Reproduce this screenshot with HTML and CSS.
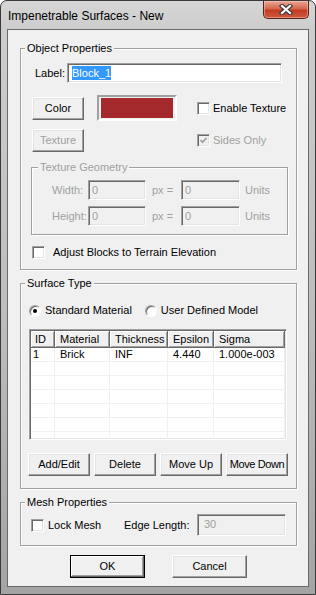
FILE: index.html
```html
<!DOCTYPE html>
<html lang="en">
<head>
    <meta charset="UTF-8">
    <title>Impenetrable Surfaces - New</title>
    <link rel="stylesheet" href="styles.css">
</head>
<body>

<div class="window">
    <div class="titlebar">
        <span class="title">Impenetrable Surfaces - New</span>
        <div class="close">
            <svg width="14" height="11" viewBox="0 0 14 11">
                <path d="M3 2 L11 9 M11 2 L3 9" stroke="#3a3a3a" stroke-width="4.4" stroke-linecap="square"/>
                <path d="M3 2 L11 9 M11 2 L3 9" stroke="#fff" stroke-width="2.2" stroke-linecap="square"/>
            </svg>
        </div>
    </div>

    <div class="client">
        <fieldset class="group obj">
            <legend>Object Properties</legend>
            <div class="body">
                <div class="row label-row">
                    <span class="lbl">Label:</span>
                    <div class="edit label-edit"><span class="sel">Block_1</span></div>
                </div>
                <div class="row color-row">
                    <button class="btn small">Color</button>
                    <div class="swatch"><div class="swatch-fill"></div></div>
                    <label class="check enable"><span class="box"></span>Enable Texture</label>
                </div>
                <div class="row tex-row">
                    <button class="btn small off">Texture</button>
                    <label class="check sides off">
                        <span class="box">
                            <svg width="9" height="9" viewBox="0 0 9 9"><polyline points="1.5,4 3.5,6.2 7.6,2" fill="none" stroke="#a0a0a0" stroke-width="1.7"/></svg>
                        </span>Sides Only
                    </label>
                </div>

                <fieldset class="group geo off">
                    <legend>Texture Geometry</legend>
                    <div class="body">
                        <div class="geo-row">
                            <span class="geo-lbl">Width:</span>
                            <div class="edit num px-edit">0</div>
                            <span class="px">px =</span>
                            <div class="edit num unit-edit">0</div>
                            <span class="units">Units</span>
                        </div>
                        <div class="geo-row">
                            <span class="geo-lbl">Height:</span>
                            <div class="edit num px-edit">0</div>
                            <span class="px">px =</span>
                            <div class="edit num unit-edit">0</div>
                            <span class="units">Units</span>
                        </div>
                    </div>
                </fieldset>

                <label class="check adjust"><span class="box"></span>Adjust Blocks to Terrain Elevation</label>
            </div>
        </fieldset>

        <fieldset class="group surface">
            <legend>Surface Type</legend>
            <div class="body">
                <div class="radios">
                    <label class="radio"><span class="dot on"></span>Standard Material</label>
                    <label class="radio second"><span class="dot"></span>User Defined Model</label>
                </div>

                <div class="listview">
                    <table>
                        <thead>
                            <tr>
                                <th class="c-id">ID</th>
                                <th class="c-mat">Material</th>
                                <th class="c-thk">Thickness</th>
                                <th class="c-eps">Epsilon</th>
                                <th>Sigma</th>
                            </tr>
                        </thead>
                        <tbody>
                            <tr><td>1</td><td>Brick</td><td>INF</td><td>4.440</td><td>1.000e-003</td></tr>
                            <tr><td></td><td></td><td></td><td></td><td></td></tr>
                            <tr><td></td><td></td><td></td><td></td><td></td></tr>
                            <tr><td></td><td></td><td></td><td></td><td></td></tr>
                            <tr><td></td><td></td><td></td><td></td><td></td></tr>
                            <tr><td></td><td></td><td></td><td></td><td></td></tr>
                            <tr><td></td><td></td><td></td><td></td><td></td></tr>
                        </tbody>
                    </table>
                </div>

                <div class="list-buttons">
                    <button class="btn wide">Add/Edit</button>
                    <button class="btn wide">Delete</button>
                    <button class="btn wide">Move Up</button>
                    <button class="btn wide tight">Move Down</button>
                </div>
            </div>
        </fieldset>

        <fieldset class="group mesh">
            <legend>Mesh Properties</legend>
            <div class="body mesh-row">
                <label class="check lock"><span class="box"></span>Lock Mesh</label>
                <span class="edge-lbl">Edge Length:</span>
                <div class="edit edge-edit">30</div>
            </div>
        </fieldset>

        <div class="footer">
            <button class="btn dlg default">OK</button>
            <button class="btn dlg cancel">Cancel</button>
        </div>
    </div>
</div>

</body>
</html>
```

FILE: styles.css
```css
body {
    margin: 0;
    font-family: "Liberation Sans", Arial, sans-serif;
    font-size: 11px;
    line-height: 13px;
    color: #000;
    background: #fff;
}

/* window frame */
.window {
    width: 316px;
    height: 595px;
    box-sizing: border-box;
    border: 1px solid #3a3a3a;
    border-radius: 7px 7px 0 0;
    padding: 0 6px 7px;
    background: linear-gradient(to bottom, #d6d6d6 0, #cdcdcd 28px, #bcbcbc 55%, #a4a4a4 100%);
    display: flex;
    flex-direction: column;
}

.titlebar {
    height: 28px;
    display: flex;
    align-items: flex-start;
}

.title {
    font-size: 12px;
    line-height: 14px;
    margin: 8px 0 0 1px;
    color: #000;
}

.close {
    margin-left: auto;
    width: 46px;
    height: 18px;
    box-sizing: border-box;
    border: 1px solid #5b2016;
    border-top: none;
    border-radius: 0 0 5px 5px;
    background: linear-gradient(to bottom, #e9a999 0, #d6664c 45%, #c33c22 55%, #cf5a3e 100%);
    box-shadow: inset 0 0 0 1px rgba(255, 210, 200, 0.45);
    display: flex;
    align-items: center;
    justify-content: center;
}

.client {
    flex: 1;
    border: 1px solid #6a6a6a;
    background: #f0f0f0;
}

/* group boxes */
.group {
    margin: 0 0 0 12px;
    padding: 0;
    width: 277px;
    box-sizing: border-box;
    min-width: 0;
    border: 1px solid #a0a0a0;
    box-shadow: 1px 1px 0 #fff, inset 1px 1px 0 #fff;
}

.group legend {
    padding: 0 2px;
    margin-left: 4px;
    line-height: 13px;
    background: #f0f0f0;
}

.obj {
    margin-top: 12px;
}

.obj > .body {
    padding: 8px 0 10px 11px;
}

.row {
    display: flex;
    align-items: center;
}

.label-row {
    height: 20px;
}

.lbl {
    margin-left: 3px;
    width: 32px;
}

.color-row {
    height: 26px;
    margin-top: 12px;
}

.tex-row {
    height: 23px;
    margin-top: 8px;
}

/* sunken edit fields */
.edit {
    box-sizing: border-box;
    border: 1px solid;
    border-color: #a0a0a0 #fff #fff #a0a0a0;
    box-shadow: inset 1px 1px 0 #696969, inset -1px -1px 0 #e3e3e3;
    background: #fff;
    padding-left: 3px;
}

.label-edit {
    width: 215px;
    height: 20px;
    display: flex;
    align-items: center;
    padding-left: 4px;
}

.sel {
    background: #3399ff;
    color: #fff;
    line-height: 14px;
}

.swatch {
    width: 80px;
    height: 26px;
    box-sizing: border-box;
    margin-left: 13px;
    border: 2px solid;
    border-color: #a0a0a0 #fff #fff #a0a0a0;
    padding: 1px 2px;
}

.swatch-fill {
    width: 72px;
    height: 20px;
    background: #a4292c;
}

/* buttons */
.btn {
    font-family: inherit;
    font-size: 11px;
    line-height: 13px;
    color: #000;
    background: #f0f0f0;
    border: 1px solid;
    border-color: #fff #696969 #696969 #fff;
    box-shadow: inset -1px -1px 0 #a0a0a0, inset 1px 1px 0 #e3e3e3;
    padding: 0;
    margin: 0;
    height: 23px;
    white-space: nowrap;
}

.btn.small {
    width: 52px;
}

.btn.off {
    color: #a0a0a0;
}

.btn.wide {
    width: 62px;
}

.btn.tight {
    letter-spacing: -0.4px;
}

.btn.dlg {
    width: 75px;
}

.btn.default {
    border-color: #000;
    box-shadow: inset -1px -1px 0 #696969, inset 1px 1px 0 #fff, inset -2px -2px 0 #a0a0a0;
}

/* checkboxes */
.check {
    display: flex;
    align-items: center;
    height: 13px;
}

.box {
    width: 13px;
    height: 13px;
    box-sizing: border-box;
    border: 1px solid;
    border-color: #a0a0a0 #fff #fff #a0a0a0;
    box-shadow: inset 1px 1px 0 #696969, inset -1px -1px 0 #e3e3e3;
    background: #fff;
    display: flex;
    align-items: center;
    justify-content: center;
    flex-shrink: 0;
}

.check.off {
    color: #a0a0a0;
}

.check.off .box {
    background: #f0f0f0;
}

.enable {
    margin-left: 20px;
}

.enable .box {
    margin-right: 3px;
}

.sides {
    margin-left: 113px;
}

.sides .box {
    margin-right: 3px;
}

.adjust {
    margin-top: 11px;
}

.adjust .box {
    margin-right: 8px;
}

/* texture geometry */
.geo {
    margin: 9px 0 0 -1px;
    width: 257px;
    color: #a0a0a0;
}

.geo legend {
    margin-left: 6px;
}

.geo > .body {
    padding: 6px 0 8px 20px;
}

.geo-row {
    display: flex;
    align-items: center;
    height: 20px;
}

.geo-row + .geo-row {
    margin-top: 6px;
}

.geo-lbl {
    width: 36px;
}

.num {
    height: 20px;
    background: #f0f0f0;
    line-height: 18px;
    color: #a0a0a0;
}

.px-edit {
    width: 58px;
}

.unit-edit {
    width: 59px;
}

.px {
    width: 29px;
    padding-left: 6px;
}

.units {
    margin-left: 5px;
}

/* surface type */
.surface {
    margin-top: 7px;
}

.surface > .body {
    padding: 14px 0 12px 8px;
}

.radios {
    display: flex;
    height: 13px;
    align-items: center;
}

.radio {
    display: flex;
    align-items: center;
}

.radio.second {
    margin-left: 13px;
}

.dot {
    width: 12px;
    height: 12px;
    box-sizing: border-box;
    border-radius: 50%;
    border: 1px solid;
    border-color: #a0a0a0 #fff #fff #a0a0a0;
    box-shadow: inset 1px 1px 0 #696969;
    background: #fff;
    margin-right: 4px;
    display: flex;
    align-items: center;
    justify-content: center;
}

.dot.on::after {
    content: "";
    width: 4px;
    height: 4px;
    border-radius: 50%;
    background: #000;
}

.listview {
    margin-top: 12px;
    width: 258px;
    height: 111px;
    box-sizing: border-box;
    border: 1px solid;
    border-color: #a0a0a0 #fff #fff #a0a0a0;
    box-shadow: inset 1px 1px 0 #696969, inset -1px -1px 0 #e3e3e3;
    padding: 1px;
    background: #fff;
    overflow: hidden;
}

.listview table {
    width: 254px;
    table-layout: fixed;
    border-collapse: separate;
    border-spacing: 0;
    font-size: 11px;
}

.listview th {
    height: 17px;
    box-sizing: border-box;
    padding: 0 0 0 5px;
    text-align: left;
    font-weight: normal;
    background: #f0f0f0;
    border-right: 1px solid #696969;
    border-bottom: 1px solid #696969;
    box-shadow: inset 1px 1px 0 #fff, inset -1px -1px 0 #a0a0a0;
    white-space: nowrap;
    overflow: hidden;
}

.listview th.c-id {
    padding-left: 4px;
    width: 24px;
}

.c-mat {
    width: 55px;
}

.c-thk {
    width: 58px;
}

.c-eps {
    width: 46px;
}

.listview td {
    height: 14px;
    box-sizing: border-box;
    padding: 0 0 0 5px;
    border-right: 1px solid #f0f0f0;
    border-bottom: 1px solid #f0f0f0;
    white-space: nowrap;
    overflow: hidden;
}

.listview td:first-child {
    padding-left: 2px;
}

.list-buttons {
    display: flex;
    gap: 4px;
    margin: 13px 0 0 -1px;
}

/* mesh */
.mesh {
    margin-top: 7px;
}

.mesh-row {
    display: flex;
    align-items: center;
    height: 22px;
    padding: 5px 0 9px 10px;
}

.lock {
    width: 93px;
}

.lock .box {
    margin-right: 4px;
}

.edge-lbl {
    width: 73px;
}

.edge-edit {
    width: 89px;
    height: 22px;
    background: #f0f0f0;
    color: #a0a0a0;
    padding: 3px 0 0 6px;
}

.footer {
    display: flex;
    margin: 9px 0 0 62px;
    gap: 27px;
}
```
